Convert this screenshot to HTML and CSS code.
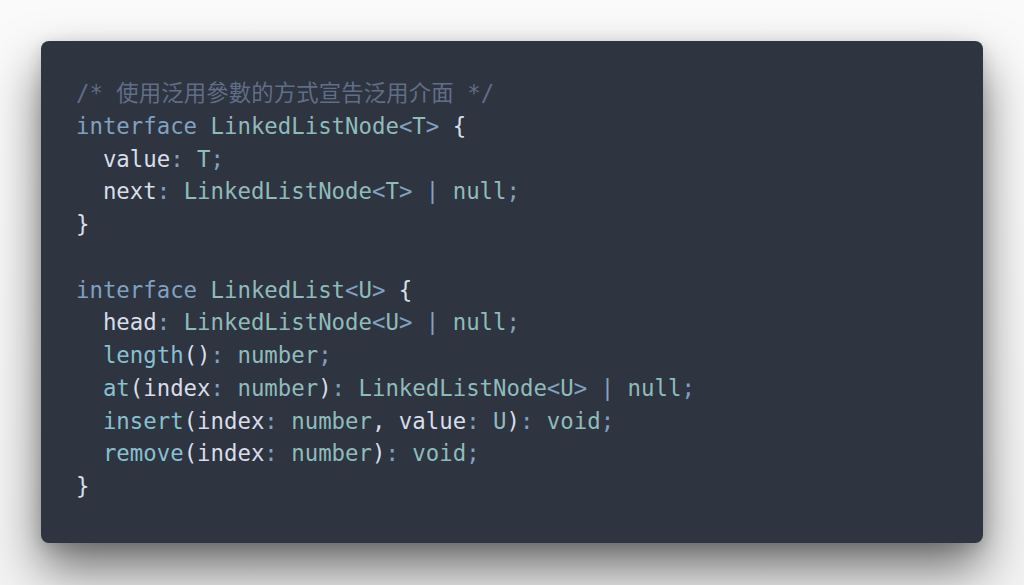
FILE: index.html
```html
<!DOCTYPE html>
<html lang="zh-Hant">
<head>
<meta charset="utf-8">
<title>LinkedList</title>
<link rel="stylesheet" href="styles.css">
</head>
<body>
<div class="stage">
<pre class="code"><code><span class="c">/* <span class="cjk">使用泛用參數的方式宣告泛用介面</span> */</span>
<span class="k">interface</span> <span class="t">LinkedListNode</span><span class="p">&lt;</span><span class="t">T</span><span class="p">&gt;</span> {
  value<span class="p">:</span> <span class="t">T</span><span class="p">;</span>
  next<span class="p">:</span> <span class="t">LinkedListNode</span><span class="p">&lt;</span><span class="t">T</span><span class="p">&gt;</span> <span class="p">|</span> <span class="n">null</span><span class="p">;</span>
}

<span class="k">interface</span> <span class="t">LinkedList</span><span class="p">&lt;</span><span class="t">U</span><span class="p">&gt;</span> {
  head<span class="p">:</span> <span class="t">LinkedListNode</span><span class="p">&lt;</span><span class="t">U</span><span class="p">&gt;</span> <span class="p">|</span> <span class="n">null</span><span class="p">;</span>
  <span class="f">length</span>()<span class="p">:</span> <span class="n">number</span><span class="p">;</span>
  <span class="f">at</span>(index<span class="p">:</span> <span class="n">number</span>)<span class="p">:</span> <span class="t">LinkedListNode</span><span class="p">&lt;</span><span class="t">U</span><span class="p">&gt;</span> <span class="p">|</span> <span class="n">null</span><span class="p">;</span>
  <span class="f">insert</span>(index<span class="p">:</span> <span class="n">number</span>, value<span class="p">:</span> <span class="t">U</span>)<span class="p">:</span> <span class="n">void</span><span class="p">;</span>
  <span class="f">remove</span>(index<span class="p">:</span> <span class="n">number</span>)<span class="p">:</span> <span class="n">void</span><span class="p">;</span>
}</code></pre>
</div>
</body>
</html>
```
FILE: styles.css
```css
html, body {
  margin: 0;
  padding: 0;
  background: #f4f4f4;
}
body {
  width: 1024px;
  height: 585px;
  overflow: hidden;
  background: linear-gradient(#fafafa 0, #f3f3f3 100%);
}
.stage {
  padding: 41px 41px 0 41px;
}
.code {
  margin: 0;
  box-sizing: border-box;
  width: 942px;
  height: 502px;
  background: #2e3440;
  border-radius: 8px;
  padding: 34px 35px 0 35px;
  box-shadow: 0 26px 50px rgba(0, 0, 0, 0.55), 0 4px 16px rgba(0, 0, 0, 0.14);
  color: #d8dee9;
  font-family: "DejaVu Sans Mono", "Noto Sans CJK TC", monospace;
  font-size: 22.35px;
  line-height: 32.75px;
}
.code code {
  font-family: inherit;
}
.c { color: #616e88; }
.cjk {
  font-family: "Noto Sans CJK TC", sans-serif;
  letter-spacing: 0.15px;
}
.k { color: #81a1c1; }
.t { color: #8fbcbb; }
.p { color: #81a1c1; }
.n { color: #8fbcbb; }
.f { color: #88c0d0; }
```
